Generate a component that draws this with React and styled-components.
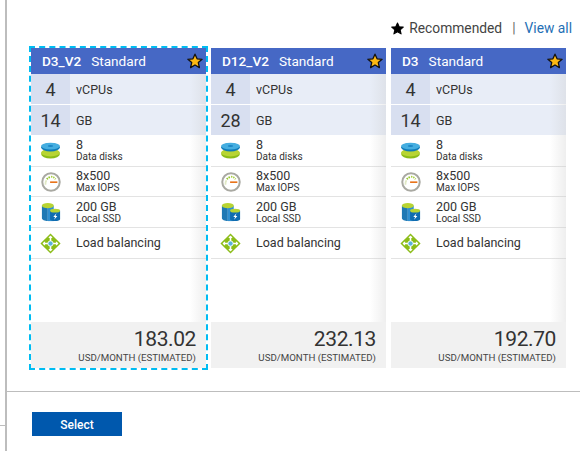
import styled, { createGlobalStyle } from 'styled-components';

const GlobalStyle = createGlobalStyle`
    html, body {
        margin: 0;
        padding: 0;
        background: #fff;
        overflow: hidden;
    }
    body {
        font-family: Roboto, "Open Sans", sans-serif;
        color: #333;
    }
`;

const sizes = [
    { name: 'D3_V2', cpus: 4, gb: 14, price: '183.02', selected: true },
    { name: 'D12_V2', cpus: 4, gb: 28, price: '232.13' },
    { name: 'D3', cpus: 4, gb: 14, price: '192.70' },
];

const StarIcon = ({ size = 16, fill = '#fdb813', stroke = '#111' }) => (
    <svg width={size} height={size} viewBox="0 0 16 16">
        <path d="M8 1.2l2.1 4.6 5 .5-3.8 3.3 1.1 5L8 12l-4.4 2.6 1.1-5L.9 6.3l5-.5z" fill={fill} stroke={stroke} strokeWidth="1.3" strokeLinejoin="round" />
    </svg>
);

const DisksIcon = () => (
    <svg width="21" height="17" viewBox="0 0 24 20">
        <ellipse cx="12" cy="14" rx="11" ry="5.500" fill="#8cbd18" />
        <ellipse cx="12" cy="12.500" rx="11" ry="4.500" fill="#b8d432" />
        <ellipse cx="12" cy="6.300" rx="11" ry="5" fill="#0f7bb8" />
        <ellipse cx="12" cy="4.800" rx="11" ry="4" fill="#45aee0" />
        <ellipse cx="12" cy="4.800" rx="3.200" ry="1.200" fill="#1d86c4" />
    </svg>
);

const GaugeIcon = () => (
    <svg width="20" height="20" viewBox="0 0 22 22">
        <circle cx="11" cy="11" r="9.600" fill="#fff" stroke="#a9a9a2" strokeWidth="2.200" />
        <path d="M5 14a6.500 6.500 0 0 1 1-5" fill="none" stroke="#dfe8c4" strokeWidth="2" />
        <path d="M6.500 8a6.500 6.500 0 0 1 3.500-2.500" fill="none" stroke="#8fc31f" strokeWidth="2" strokeDasharray="1.500 1" />
        <path d="M11 5a6.500 6.500 0 0 1 5 3" fill="none" stroke="#a8cf45" strokeWidth="2" strokeDasharray="1.500 1" />
        <path d="M10 11.200h8" stroke="#e8731a" strokeWidth="1.800" />
    </svg>
);

const SsdIcon = () => (
    <svg width="20" height="20" viewBox="0 0 22 22">
        <path d="M1 4v14c0 1.600 3 3 6.500 3V4z" fill="#1e78b4" />
        <path d="M7.500 4h6.500v17H7.500z" fill="#2f8fd0" />
        <ellipse cx="7.500" cy="4" rx="6.500" ry="2.800" fill="#b8d432" />
        <path d="M10 9.500h11V19c0 1.200-2.400 2-5.500 2S10 20.200 10 19z" fill="#0f6cb0" />
        <ellipse cx="15.500" cy="9.500" rx="5.500" ry="2.100" fill="#b8d432" />
        <path d="M17 12.500l-3.500 4h2l-1 3 3.500-4.200h-2z" fill="#fff" />
    </svg>
);

const BalanceIcon = () => (
    <svg width="21" height="21" viewBox="0 0 24 24">
        <path d="M12 .5L23.500 12 12 23.500 .5 12z" fill="#8cbd18" />
        <path d="M12 3.500v17M3.500 12h17" stroke="#fff" strokeWidth="1.800" />
        <path d="M12 2.800l2.500 3h-5zM12 21.200l2.500-3h-5zM2.800 12l3-2.500v5zM21.200 12l-3-2.500v5z" fill="#fff" />
        <circle cx="12" cy="12" r="3" fill="#59b4d9" stroke="#fff" />
    </svg>
);

const features = [
    { icon: <DisksIcon />, value: '8', label: 'Data disks', height: 32 },
    { icon: <GaugeIcon />, value: '8x500', label: 'Max IOPS', height: 30 },
    { icon: <SsdIcon />, value: '200 GB', label: 'Local SSD', height: 31 },
    { icon: <BalanceIcon />, value: 'Load balancing', height: 31 },
];

const SpecCard = ({ size }) => (
    <Card $selected={size.selected}>
        <CardHeader>
            <SizeName>{size.name}</SizeName>
            <Tier>Standard</Tier>
            <HeaderStar><StarIcon /></HeaderStar>
        </CardHeader>
        <MetricRow>
            <MetricValue>{size.cpus}</MetricValue>
            <MetricLabel>vCPUs</MetricLabel>
        </MetricRow>
        <MetricRow>
            <MetricValue>{size.gb}</MetricValue>
            <MetricLabel>GB</MetricLabel>
        </MetricRow>
        {features.map((feature) => (
            <FeatureRow $height={feature.height} key={feature.value}>
                <FeatureIcon>{feature.icon}</FeatureIcon>
                <FeatureText>
                    <strong>{feature.value}</strong>
                    {feature.label && <small>{feature.label}</small>}
                </FeatureText>
            </FeatureRow>
        ))}
        <Spacer />
        <PriceBlock>
            <Price>{size.price}</Price>
            <PriceUnit>USD/MONTH (ESTIMATED)</PriceUnit>
        </PriceBlock>
    </Card>
);

const App = () => (
    <Page>
        <GlobalStyle />
        <Gutter><GutterTick /></Gutter>
        <Blade>
            <Content>
                <TopLinks>
                    <StarIcon size={13} fill="#000" stroke="#000" />
                    <span>Recommended</span>
                    <Divider>|</Divider>
                    <ViewAll>View all</ViewAll>
                </TopLinks>
                <Cards>
                    {sizes.map((size) => <SpecCard size={size} key={size.name} />)}
                </Cards>
            </Content>
            <Footer>
                <SelectButton>Select</SelectButton>
            </Footer>
        </Blade>
    </Page>
);

export default App;

const Page = styled.div`
    display: flex;
    width: 580px;
    height: 451px;
    overflow: hidden;
`;

const Gutter = styled.div`
    width: 5px;
    padding-top: 425px;
`;

const GutterTick = styled.div`
    height: 1px;
    background: #bdbdbd;
`;

const Blade = styled.div`
    flex: 1;
    border-left: 2px solid #bdbdbd;
`;

const Content = styled.div`
    height: 392px;
    box-sizing: border-box;
    border-bottom: 1px solid #bdbdbd;
    padding: 18px 0 0 24px;
`;

const TopLinks = styled.div`
    display: flex;
    align-items: center;
    justify-content: flex-end;
    gap: 5px;
    height: 20px;
    padding-right: 8px;
    margin-bottom: 10px;
    font-size: 13.8px;
    color: #444;
`;

const Divider = styled.span`
    margin: 0 4px 0 5px;
    color: #666;
`;

const ViewAll = styled.a`
    color: #1f6fb5;
`;

const Cards = styled.div`
    display: flex;
    gap: 5px;
`;

const Card = styled.div`
    position: relative;
    display: flex;
    flex-direction: column;
    width: 175px;
    height: 320px;
    outline: ${(props) => (props.$selected ? '2px dashed #00bcf2' : 'none')};
    outline-offset: 0;

    &::after {
        content: '';
        position: absolute;
        top: 26px;
        right: 0;
        bottom: 46px;
        width: 16px;
        background: linear-gradient(to right, rgba(200, 200, 200, 0), rgba(200, 200, 200, 0.3));
    }
`;

const CardHeader = styled.div`
    display: flex;
    align-items: center;
    height: 26px;
    padding: 0 3px 0 11px;
    background: #4668c5;
    color: #fff;
    font-size: 13.6px;
`;

const SizeName = styled.span`
    font-weight: 500;
    margin-right: 10px;
`;

const Tier = styled.span`
    flex: 1;
`;

const HeaderStar = styled.span`
    display: flex;
`;

const MetricRow = styled.div`
    display: flex;
    height: 30px;
    background: #e8edf7;

    & + & {
        margin-top: 1px;
    }
`;

const MetricValue = styled.div`
    display: flex;
    align-items: center;
    justify-content: center;
    width: 39px;
    background: #d8dff0;
    font-size: 18px;
    color: #333;
`;

const MetricLabel = styled.div`
    display: flex;
    align-items: center;
    padding-left: 6px;
    font-size: 12.5px;
`;

const FeatureRow = styled.div`
    display: flex;
    align-items: center;
    height: ${(props) => props.$height}px;
    box-sizing: border-box;
    border-bottom: 1px solid #e3e3e3;
`;

const FeatureIcon = styled.div`
    display: flex;
    justify-content: center;
    width: 39px;
`;

const FeatureText = styled.div`
    display: flex;
    flex-direction: column;
    padding-left: 6px;

    strong {
        font-weight: 400;
        font-size: 12.5px;
        line-height: 12px;
    }

    small {
        font-size: 10px;
        line-height: 11px;
    }
`;

const Spacer = styled.div`
    flex: 1;
`;

const PriceBlock = styled.div`
    display: flex;
    flex-direction: column;
    align-items: flex-end;
    height: 46px;
    box-sizing: border-box;
    padding: 5px 10px 0 0;
    background: #f1f1f1;
`;

const Price = styled.div`
    font-size: 21px;
    line-height: 25px;
    letter-spacing: -0.4px;
    color: #333;
`;

const PriceUnit = styled.div`
    font-size: 9.7px;
    line-height: 12px;
    color: #444;
`;

const Footer = styled.div`
    padding: 20px 0 0 25px;
`;

const SelectButton = styled.button`
    display: block;
    width: 90px;
    height: 24px;
    border: none;
    padding: 1px 0 0;
    background: #0058ad;
    color: #fff;
    font-family: inherit;
    font-size: 12px;
    font-weight: 500;
`;
